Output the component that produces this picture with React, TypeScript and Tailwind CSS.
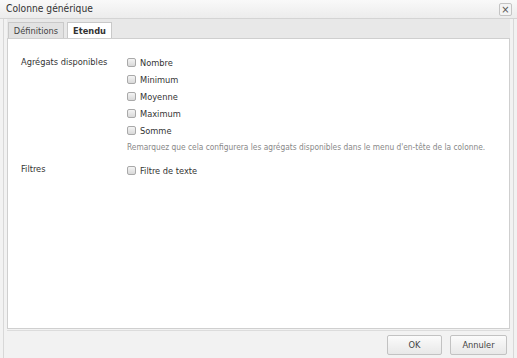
import React from "react";

const aggregats = ["Nombre", "Minimum", "Moyenne", "Maximum", "Somme"];

function Check({ label }: { label: string }) {
  return (
    <label className="flex items-center h-[17px] gap-[4px] text-[#333]">
      <span className="w-[9px] h-[9px] border border-[#a9a9a9] rounded-[2px] bg-gradient-to-b from-[#f4f4f4] to-[#d9d9d9]" />
      <span>{label}</span>
    </label>
  );
}

export default function App() {
  return (
    <div
      className="w-[517px] h-[358px] flex flex-col bg-[#f2f2f2] text-[9.2px] overflow-hidden"
      style={{ fontFamily: '"DejaVu Sans Condensed", "Liberation Sans", sans-serif' }}
    >
      {/* title bar */}
      <div className="h-[19px] flex items-center justify-between pl-[6px] pr-[5px] bg-gradient-to-b from-[#f9f9f9] to-[#ececec] border-b border-[#d4d4d4]">
        <span className="text-[10.2px] text-[#333]">Colonne générique</span>
        <button className="w-[13px] h-[13px] flex items-center justify-center border border-[#c4c4c4] rounded-[2px] bg-[#f4f4f4] text-[#555] text-[11px] leading-none">
          ×
        </button>
      </div>

      {/* body */}
      <div className="flex-1 flex flex-col mx-[3px] border-l border-r border-[#d8d8d8] pl-[3px] pr-[3px]">
        {/* tabs */}
        <div className="h-[19px] flex items-end gap-[3px] pl-[1px] bg-[#e8e8e8]">
          <div className="h-[16px] w-[56px] justify-center flex items-center border border-b-0 border-[#c9c9c9] bg-[#e2e2e2] text-[#444]">
            Définitions
          </div>
          <div className="h-[17px] w-[45px] justify-center flex items-center border border-b-0 border-[#c9c9c9] bg-white font-bold text-[#333] -mb-px">
            Etendu
          </div>
        </div>

        {/* content */}
        <div className="h-[291px] bg-white border border-[#cfcfcf] pt-[15px] pl-[13px]">
          <div className="flex">
            <div className="w-[106px] text-[#333] leading-[17px] -mt-[1px]">Agrégats disponibles</div>
            <div className="flex flex-col">
              {aggregats.map((a) => (
                <Check key={a} label={a} />
              ))}
              <div className="text-[8.3px] text-[#888] whitespace-nowrap mt-[2px] mb-[9px]">
                Remarquez que cela configurera les agrégats disponibles dans le menu d'en-tête de la colonne.
              </div>
            </div>
          </div>
          <div className="flex">
            <div className="w-[106px] text-[#333] leading-[17px] -mt-[2px]">Filtres</div>
            <div className="flex flex-col">
              <Check label="Filtre de texte" />
            </div>
          </div>
        </div>

        {/* footer */}
        <div className="flex-1 flex justify-end items-start gap-[8px] pt-[4px] pr-[3px] border-t border-[#dcdcdc] mt-[1px]">
          <button className="w-[55px] h-[20px] border border-[#c2c2c2] rounded-[2px] bg-gradient-to-b from-[#fbfbfb] to-[#e8e8e8] text-[#444]">
            OK
          </button>
          <button className="w-[57px] h-[20px] border border-[#c2c2c2] rounded-[2px] bg-gradient-to-b from-[#fbfbfb] to-[#e8e8e8] text-[#444]">
            Annuler
          </button>
        </div>
      </div>
    </div>
  );
}
